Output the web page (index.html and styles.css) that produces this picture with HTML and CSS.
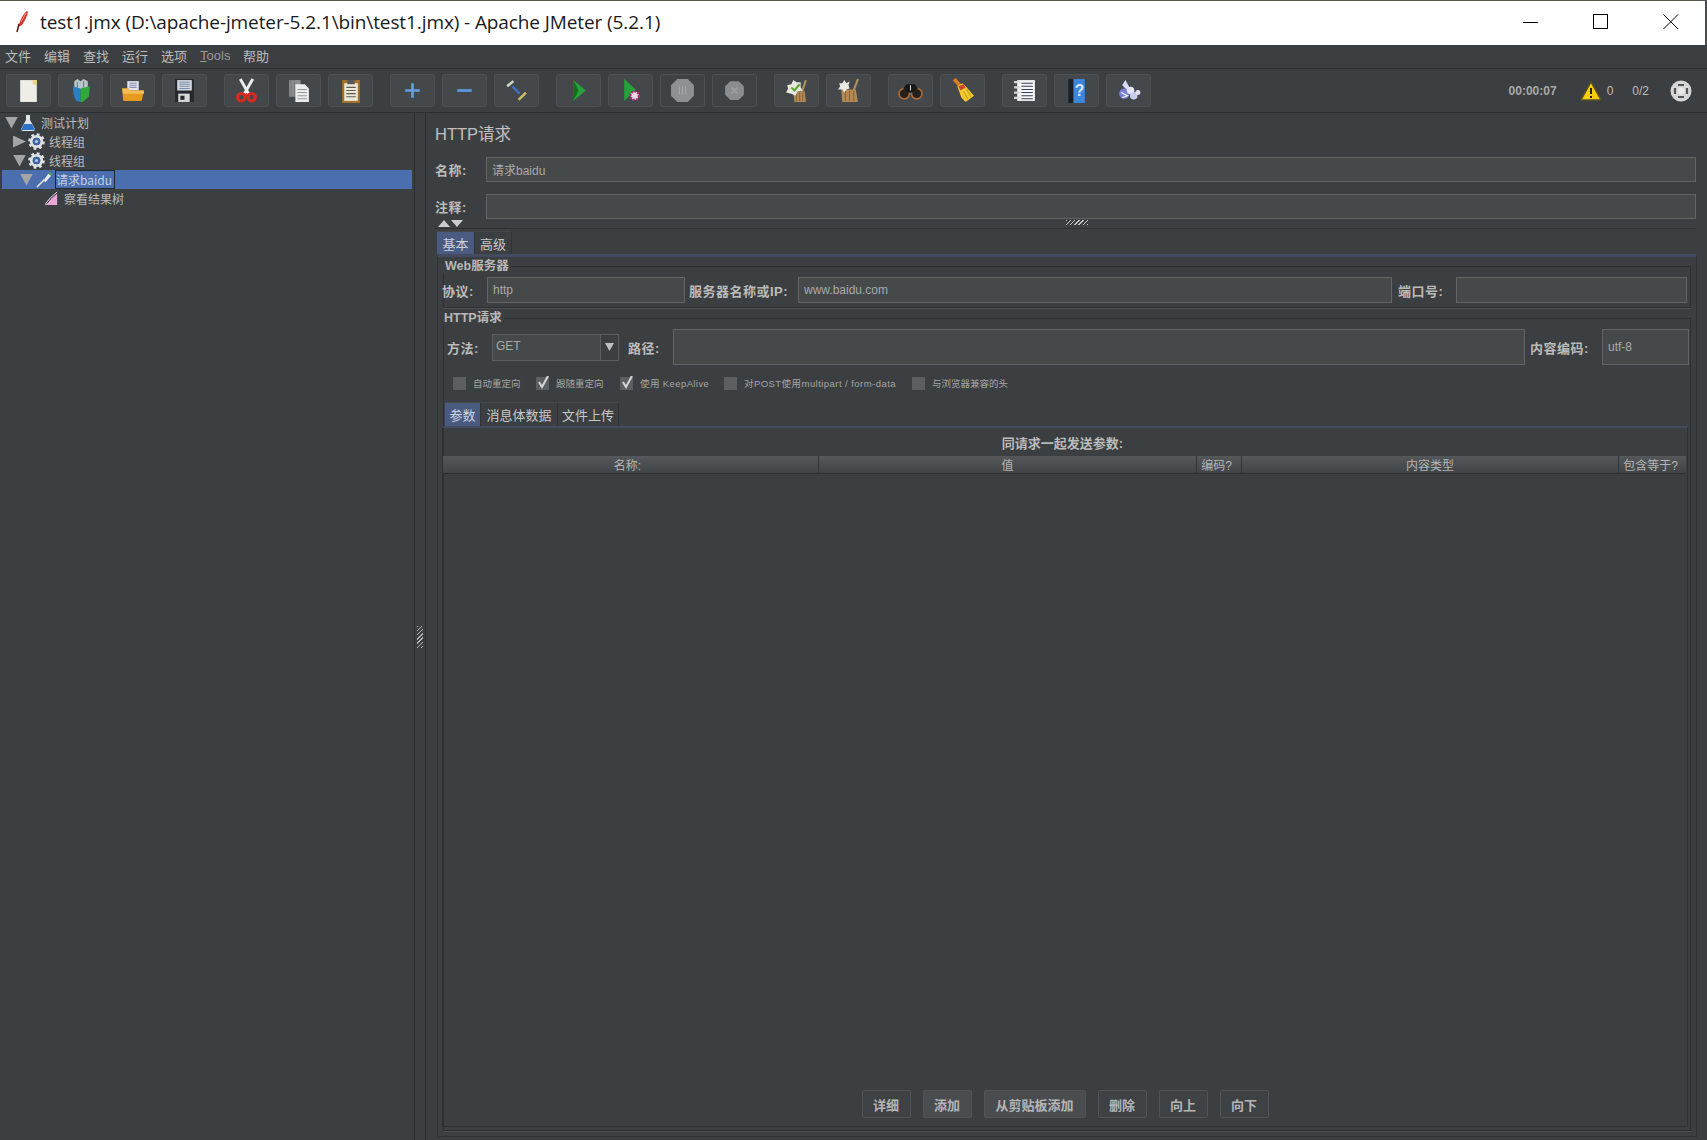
FILE: index.html
```html
<!DOCTYPE html>
<html lang="zh">
<head>
<meta charset="utf-8">
<title>Apache JMeter</title>
<link rel="stylesheet" href="styles.css">
</head>
<body>
<div class="window">
  <header class="titlebar">
    <svg class="feather" viewBox="0 0 14 24"><path d="M12 1C9 3 6 8 4 14L3 17 7 15C10 11 12 6 13 2Z" fill="#d8322a"/><path d="M4 14L2 22" stroke="#5a1a14" stroke-width="1.5"/><path d="M11 3L6 12" stroke="#f0a080"/></svg>
    <span class="title-text">test1.jmx (D:\apache-jmeter-5.2.1\bin\test1.jmx) - Apache JMeter (5.2.1)</span>
    <div class="winctl">
      <svg class="wc" viewBox="0 0 16 16"><path d="M0 8.5H15" stroke="#000"/></svg>
      <svg class="wc" viewBox="0 0 16 16"><rect x="0.5" y="0.5" width="14" height="14" fill="none" stroke="#000"/></svg>
      <svg class="wc" viewBox="0 0 16 16"><path d="M0.5 0.5L15 15M15 0.5L0.5 15" stroke="#000"/></svg>
    </div>
  </header>
  <nav class="menubar">
    <span>文件</span><span>编辑</span><span>查找</span><span>运行</span><span>选项</span><span class="menu-latin"><u>T</u>ools</span><span>帮助</span>
  </nav>
  <div class="toolbar">
    <div class="tgroup">
      <div class="tbtn"><svg viewBox="0 0 24 24"><path d="M4 2H20V23H4Z" fill="#efeee6"/><path d="M16 2H20V6L18 7L16 5Z" fill="#efd678"/></svg></div>
      <div class="tbtn"><svg viewBox="0 0 24 24"><path d="M6 3L9 1L12 3L15 1L19 3V11H6Z" fill="#b9c6c8"/><path d="M5 8L12 10V23L8 22Q4 16 5 8Z" fill="#2a7fc4"/><path d="M12 10L21 8L20 18L14 23H12Z" fill="#2fa83c"/><path d="M9 4V9M15 3V9" stroke="#5a7a88"/></svg></div>
      <div class="tbtn"><svg viewBox="0 0 24 24"><path d="M7 3H18V12H7Z" fill="#e0e3ee"/><path d="M9 5H16M9 7H16M9 9H16" stroke="#8a8fb0"/><path d="M2 10H8L10 12H23L21 21Q21 22 20 22H4Q3 22 3 21Z" fill="#e69a1e"/><path d="M2 10H8L10 12H23V15H3Z" fill="#f4bd57"/></svg></div>
      <div class="tbtn"><svg viewBox="0 0 24 24"><path d="M3 1H21V23H3Z" fill="#26282b"/><path d="M5 2H19V12H5Z" fill="#d4d9e4"/><path d="M7 4H17M7 6H17M7 8H17M7 10H17" stroke="#7a8ea8"/><path d="M6 15H17V23H6Z" fill="#d6d8da"/><path d="M8 17H12V21H8Z" fill="#26282b"/></svg></div>
    </div>
    <div class="tgroup">
      <div class="tbtn"><svg viewBox="0 0 24 24"><path d="M6 1L14 15M18 1L10 15" stroke="#eeeeee" stroke-width="2.8"/><circle cx="7" cy="18.5" r="3.6" fill="none" stroke="#d62a22" stroke-width="3"/><circle cx="17" cy="18.5" r="3.6" fill="none" stroke="#d62a22" stroke-width="3"/><path d="M9 15H15L12 18Z" fill="#d62a22"/></svg></div>
      <div class="tbtn"><svg viewBox="0 0 24 24"><path d="M3 2H14V18H3Z" fill="#8d9094"/><path d="M5 2V18M8 2V18" stroke="#777"/><path d="M9 6H18L22 10V23H9Z" fill="#ececec"/><path d="M11 11H20M11 14H20M11 17H20M11 20H20" stroke="#999"/></svg></div>
      <div class="tbtn"><svg viewBox="0 0 24 24"><path d="M4 2H21V24H4Z" fill="#a5702a"/><path d="M6 5H19V22H6Z" fill="#ece8d6"/><path d="M9 2H16V6H9Z" fill="#55585a"/><path d="M8 9H17M8 12H17M8 15H17M8 18H17" stroke="#5a5a5a"/></svg></div>
    </div>
    <div class="tgroup">
      <div class="tbtn"><svg viewBox="0 0 24 24"><path d="M12 5V19M5 12H19" stroke="#5f9fe6" stroke-width="2.6"/></svg></div>
      <div class="tbtn"><svg viewBox="0 0 24 24"><path d="M5 12H19" stroke="#5a94d8" stroke-width="2.8"/></svg></div>
      <div class="tbtn"><svg viewBox="0 0 24 24"><path d="M3 8L9 3" stroke="#d8d8c8" stroke-width="2.4"/><path d="M8 8L15 15" stroke="#3f6fc0" stroke-width="2.4"/><path d="M14 21L21 14" stroke="#c8c068" stroke-width="2.4"/></svg></div>
    </div>
    <div class="tgroup">
      <div class="tbtn"><svg viewBox="0 0 24 24"><path d="M7 2L19 12L7 22Z" fill="#25a23a"/><path d="M7 2L12 12L7 22Z" fill="#126c22"/></svg></div>
      <div class="tbtn"><svg viewBox="0 0 24 24"><path d="M6 1L17 11L6 22Z" fill="#25a23a"/><circle cx="16" cy="17" r="4" fill="#e8d8e8" stroke="#b02a70" stroke-width="2" stroke-dasharray="2 1"/></svg></div>
      <div class="tbtn ghost"><svg viewBox="0 0 24 24"><path d="M7 1H17L23 7V17L17 23H7L1 17V7Z" fill="#8f9091"/><path d="M9 8V16M12 8V16M15 8V16" stroke="#a8a8a8"/></svg></div>
      <div class="tbtn ghost"><svg viewBox="0 0 24 24"><path d="M8 3H16L21 8V16L16 21H8L3 16V8Z" fill="#8b8c8d"/><path d="M9 9L15 15M15 9L9 15" stroke="#9f9f9f" stroke-width="2"/></svg></div>
    </div>
    <div class="tgroup">
      <div class="tbtn"><svg viewBox="0 0 24 24"><path d="M9 13H20L21 23H10Z" fill="#b58955"/><path d="M12 14V22M15 14V22M18 14V22" stroke="#8a6435"/><path d="M21 2L17 14" stroke="#b09060" stroke-width="2"/><path d="M3 7L7 6L9 2L12 4L16 4L16 9L18 12L13 13L11 17L7 15L2 14L4 10Z" fill="#e8e8e0"/><path d="M7 9L10 12L15 6" stroke="#5aa832" stroke-width="2" fill="none"/></svg></div>
      <div class="tbtn"><svg viewBox="0 0 24 24"><path d="M5 11H19L21 23H6Z" fill="#b58955"/><path d="M9 12V22M13 12V22M17 12V22" stroke="#8a6435"/><path d="M21 1L17 12" stroke="#b09060" stroke-width="2"/><path d="M13 3L10 5L8 2L6 5L3 5L4 8L2 11L6 11L8 14L10 11L13 10L12 7Z" fill="#e8e8e0"/></svg></div>
    </div>
    <div class="tgroup">
      <div class="tbtn"><svg viewBox="0 0 24 24"><circle cx="6" cy="15" r="5" fill="#26201d" stroke="#a86a38" stroke-width="1.6"/><circle cx="18" cy="15" r="5" fill="#26201d" stroke="#a86a38" stroke-width="1.6"/><path d="M5 10L8 6H16L19 10L14 14H10Z" fill="#181818"/><path d="M12 7V12" stroke="#ddd"/></svg></div>
      <div class="tbtn"><svg viewBox="0 0 24 24"><path d="M4 1L11 9" stroke="#d87a20" stroke-width="3.6"/><path d="M7 8L12 5L15 8L23 17L15 23L11 19Z" fill="#f2c92c"/><path d="M8 8L13 6L15 9L10 12Z" fill="#c8482a"/><path d="M13 13L17 20M16 11L20 18" stroke="#c9a018"/></svg></div>
    </div>
    <div class="tgroup">
      <div class="tbtn"><svg viewBox="0 0 24 24"><path d="M5 2H22V22H5Z" fill="#f5f5f5"/><path d="M9 5H20M9 8H20M9 11H20M9 14H20M9 17H20M9 20H20" stroke="#344058"/><path d="M2 4H8M2 9H8M2 14H8M2 19H8" stroke="#d8d8d8" stroke-width="2.2"/></svg></div>
      <div class="tbtn"><svg viewBox="0 0 24 24"><path d="M4 1H20V24H4Z" fill="#3d86da"/><path d="M4 1H9V24H4Z" fill="#1c1f24"/><text x="15" y="17" class="qmark">?</text></svg></div>
      <div class="tbtn"><svg viewBox="0 0 24 24"><path d="M9 2L13 9L10 11L6 7Z" fill="#d8dcf4"/><circle cx="8" cy="15" r="5" fill="#7a80d8"/><circle cx="14" cy="12" r="3.6" fill="#e4e6f6"/><circle cx="17" cy="17" r="3.6" fill="#c8cdf0"/><circle cx="21" cy="14" r="2.4" fill="#dfe1f2"/><path d="M5 14L11 17L6 19" stroke="#fff" fill="none"/></svg></div>
    </div>
    <div class="status">
      <span class="timer">00:00:07</span>
      <span class="warn"><svg class="warn-ic" viewBox="0 0 22 20"><path d="M11 1L21 19H1Z" fill="#f4cd0a" stroke="#5a5020" stroke-width="1.4"/><path d="M11 7V13M11 15V17" stroke="#222" stroke-width="2"/></svg>0</span>
      <span class="count">0/2</span>
      <svg class="globe" viewBox="0 0 22 22"><circle cx="11" cy="11" r="10.5" fill="#d6d6d6"/><path d="M8 5H14M8 17H14M5 8V14M17 8V14" stroke="#555" stroke-width="2.2"/><circle cx="11" cy="11" r="3.6" fill="#e8e8e8"/></svg>
    </div>
  </div>
  <div class="workspace">
    <aside class="tree">
      <div class="row d0"><i class="arrow down"></i><svg class="tic" viewBox="0 0 16 16"><path d="M6 0H10V5L15 14Q15 16 13 16H3Q1 16 1 14L6 5Z" fill="#dfe4ea"/><path d="M4 9H12L15 15H1Z" fill="#2a72c8"/></svg><span>测试计划</span></div>
      <div class="row d1"><i class="arrow right"></i><svg class="tic" viewBox="0 0 18 18"><circle cx="9" cy="9" r="5.5" fill="none" stroke="#dfe3e8" stroke-width="3"/><circle cx="9" cy="9" r="7.6" fill="none" stroke="#dfe3e8" stroke-width="2.4" stroke-dasharray="3 2.97"/><circle cx="9" cy="9" r="4" fill="#3f66a8"/><circle cx="9" cy="9" r="1.6" fill="#b8c8e0"/></svg><span>线程组</span></div>
      <div class="row d1"><i class="arrow down"></i><svg class="tic" viewBox="0 0 18 18"><circle cx="9" cy="9" r="5.5" fill="none" stroke="#dfe3e8" stroke-width="3"/><circle cx="9" cy="9" r="7.6" fill="none" stroke="#dfe3e8" stroke-width="2.4" stroke-dasharray="3 2.97"/><circle cx="9" cy="9" r="4" fill="#3f66a8"/><circle cx="9" cy="9" r="1.6" fill="#b8c8e0"/></svg><span>线程组</span></div>
      <div class="row d2 selected"><i class="arrow down"></i><svg class="tic" viewBox="0 0 18 18"><path d="M1 17L9 9" stroke="#e8e8e8" stroke-width="1.6"/><path d="M8 10L13 3L16 5L10 12Z" fill="#e8ece8"/><path d="M13 3L15 1L17 3L16 5Z" fill="#3fa85a"/></svg><span class="focused">请求baidu</span></div>
      <div class="row d3"><svg class="tic" viewBox="0 0 16 16"><path d="M2 15L8 8L14 3V15Z" fill="#eaa6d6"/><path d="M2 15V13L7 7L14 1" stroke="#f4e8f4" fill="none"/></svg><span>察看结果树</span></div>
    </aside>
    <div class="split-v"><i class="grip-v"></i></div>
    <main class="pane">
      <h1 class="pane-title">HTTP请求</h1>
      <div class="name-row gap"><label>名称:</label><div class="field">请求baidu</div></div>
      <div class="name-row"><label>注释:</label><div class="field"></div></div>
      <div class="split-h"><span class="carets"><i class="car-up"></i><i class="car-down"></i></span><i class="grip-h"></i></div>
      <div class="tabs outer-tabs"><span class="tab active t-basic">基本</span><span class="tab">高级</span></div>
      <section class="tab-body">
        <fieldset class="group web">
          <legend>Web服务器</legend>
          <div class="web-row">
            <label class="l-proto">协议:</label><div class="field f-proto">http</div>
            <label class="l-host">服务器名称或IP:</label><div class="field f-host">www.baidu.com</div>
            <label class="l-port">端口号:</label><div class="field f-port"></div>
          </div>
        </fieldset>
        <fieldset class="group http">
          <legend>HTTP请求</legend>
          <div class="path-row">
            <label class="l-method">方法:</label>
            <div class="select"><span class="sel-val">GET</span><span class="sel-btn"><i class="car-down big"></i></span></div>
            <label class="l-path">路径:</label><div class="field f-path"></div>
            <label class="l-enc">内容编码:</label><div class="field f-enc">utf-8</div>
          </div>
          <div class="checks">
            <span class="chk c1"><i class="box"></i><span>自动重定向</span></span>
            <span class="chk c2"><i class="box"><svg viewBox="0 0 14 14"><path d="M3 6L6 11L12 0" fill="none" stroke="#d6d6d6" stroke-width="2"/></svg></i><span>跟随重定向</span></span>
            <span class="chk c3"><i class="box"><svg viewBox="0 0 14 14"><path d="M3 6L6 11L12 0" fill="none" stroke="#d6d6d6" stroke-width="2"/></svg></i><span>使用 KeepAlive</span></span>
            <span class="chk c4"><i class="box"></i><span>对POST使用multipart / form-data</span></span>
            <span class="chk c5"><i class="box"></i><span>与浏览器兼容的头</span></span>
          </div>
          <div class="tabs inner-tabs"><span class="tab active t-params">参数</span><span class="tab t-body">消息体数据</span><span class="tab t-file">文件上传</span></div>
          <section class="params">
            <div class="params-title">同请求一起发送参数:</div>
            <div class="thead">
              <span class="th c-name">名称:</span><span class="th c-val">值</span><span class="th c-code">编码?</span><span class="th c-type">内容类型</span><span class="th c-eq">包含等于?</span>
            </div>
            <div class="tbody"></div>
            <div class="actions">
              <span class="act a2">详细</span><span class="act a2 on">添加</span><span class="act a6 on">从剪贴板添加</span><span class="act a2">删除</span><span class="act a2">向上</span><span class="act a2">向下</span>
            </div>
          </section>
        </fieldset>
      </section>
    </main>
  </div>
</div>
</body>
</html>
```

FILE: styles.css
```css
* { box-sizing: border-box; }
html, body { margin: 0; height: 100%; overflow: hidden; }
body { font-family: "Liberation Sans", "Noto Sans CJK SC", sans-serif; font-size: 12px; color: #bbbbbb; background: #3c3f41; }
.window { width: 1707px; height: 1140px; display: flex; flex-direction: column; background: #3c3f41; }

.titlebar { height: 45px; flex: none; background: #fff; border-top: 1px solid #55574f; display: flex; align-items: center; padding: 0 0 2px 15px; color: #1a1a1a; border-right: 2px solid #4a4c4e; }
.feather { width: 14px; height: 24px; margin-right: 11px; }
.title-text { font-family: "Open Sans", "Noto Sans", sans-serif; font-size: 19px; letter-spacing: -0.1px; white-space: nowrap; }
.winctl { margin-left: auto; display: flex; gap: 54px; padding-right: 26px; }
.wc { width: 16px; height: 16px; }

.menubar { height: 24px; flex: none; display: flex; align-items: center; gap: 13px; padding: 0 0 2px 5px; font-size: 13px; color: #bbb; border-bottom: 1px solid #2b2d2e; font-family: "Noto Sans CJK SC", sans-serif; }
.menu-latin { font-family: "Liberation Sans", sans-serif; color: #999; width: 30px; }

.toolbar { height: 44px; flex: none; display: flex; align-items: center; padding-left: 6px; gap: 17px; border-bottom: 1px solid #2b2d2e; }
.tgroup { display: flex; gap: 7px; }
.tbtn { width: 45px; height: 33px; display: flex; align-items: center; justify-content: center; background: #45484a; border: 1px solid #4e5153; border-radius: 3px; }
.tbtn svg { width: 25px; height: 25px; }
.tbtn.ghost { background: #3f4244; }
.qmark { font: bold 15px "Liberation Sans", sans-serif; fill: #d8e8ff; text-anchor: middle; }
.status { margin-left: auto; display: flex; align-items: center; font-size: 12px; color: #bbb; padding-right: 15px; }
.timer { margin-right: 23px; font-weight: bold; color: #a8a8a8; }
.warn { display: flex; align-items: center; gap: 5px; margin-right: 19px; }
.warn-ic { width: 22px; height: 20px; }
.count { margin-right: 21px; }
.globe { width: 22px; height: 22px; }

.workspace { flex: 1; display: flex; min-height: 0; }
.tree { width: 415px; flex: none; padding: 0 2px; border-right: 1px solid #2b2d2e; font-family: "Noto Sans CJK SC", sans-serif; font-size: 12px; }
.row { height: 19px; display: flex; align-items: center; }
.row.d0 { padding-left: 3px; }
.row.d1 { padding-left: 11px; }
.row.d2 { padding-left: 18px; }
.row.d3 { padding-left: 42px; }
.row.selected { background: #4b6eaf; }
.arrow { width: 13px; height: 12px; flex: none; margin-right: 2px; background: #a5a5a5; }
.arrow.down { clip-path: polygon(0 0, 100% 0, 50% 100%); }
.arrow.right { clip-path: polygon(0 0, 100% 50%, 0 100%); }
.tic { width: 17px; height: 17px; flex: none; margin-right: 4px; }
.d3 .tic { width: 15px; height: 15px; margin-right: 5px; }
.d0 .tic { width: 16px; height: 16px; margin-right: 5px; }
.d2 .tic { margin-right: 2px; margin-left: 1px; }
.focused { border: 1px solid #1d2733; padding: 0 2px 0 0; line-height: 17px; height: 19px; width: 60px; color: #c3cfe2; }

.split-v { width: 10px; flex: none; position: relative; }
.grip-v { position: absolute; left: 2px; top: 513px; width: 6px; height: 22px; background: repeating-linear-gradient(135deg, #b5b5b5 0 1px, #3c3f41 1px 3px); }

.pane { flex: 1; min-width: 0; display: flex; flex-direction: column; padding: 0 11px 0 9px; border-left: 1px solid #2b2d2e; }
.pane-title { margin: 10px 0 0; font-size: 16.5px; line-height: 22px; font-weight: normal; color: #c0c0c0; font-family: "Liberation Sans", "Noto Sans CJK SC", sans-serif; height: 34px; }
.name-row { display: flex; align-items: center; height: 25px; flex: none; }
.name-row.gap { margin-bottom: 12px; }
.name-row label { width: 51px; flex: none; font-weight: bold; font-size: 13px; letter-spacing: 0.5px; }
.field { flex: 1; height: 100%; display: flex; align-items: center; background: #45494a; border: 1px solid #646464; padding-left: 5px; color: #a9a9a9; font-size: 12px; }

.split-h { height: 10px; flex: none; display: flex; align-items: center; position: relative; border-bottom: 1px solid #2f3133; }
.carets { display: flex; margin-left: 3px; gap: 1px; }
.car-up, .car-down { display: block; width: 12px; height: 7px; background: #ccc; }
.car-up { clip-path: polygon(50% 0, 100% 100%, 0 100%); }
.car-down { clip-path: polygon(0 0, 100% 0, 50% 100%); }
.grip-h { position: absolute; left: 631px; top: 1px; width: 22px; height: 5px; background: repeating-linear-gradient(135deg, #c5c5c5 0 1px, #3c3f41 1px 3px); }

.tabs { display: flex; align-items: flex-end; padding-left: 2px; }
.tab { height: 23px; display: flex; align-items: center; justify-content: center; font-size: 13px; color: #c8c8c8; border-right: 1px solid #313335; border-top: 1px solid #46494b; }
.tab.active { background: #4a5a80; color: #ccd4e4; }
.outer-tabs { margin-top: 1px; height: 24px; flex: none; }
.outer-tabs .tab { width: 37px; }
.outer-tabs .t-basic { width: 38px; }
.tab-body { flex: 1; min-height: 0; margin: 0 0 3px 2px; display: flex; flex-direction: column; padding: 1px 5px 5px; border-top: 3px solid #454a63; border-left: 1px solid #2f3133; border-right: 1px solid #2f3133; border-bottom: 1px solid #2f3133; width: 1260px; }

.group { margin: 0; padding: 0 5px 0 4px; border: 1px solid #2d2f31; min-width: 0; box-shadow: 0 1px 0 #4d5052; }
.group legend { padding: 0 2px; margin-left: -5px; font-size: 12.5px; font-weight: bold; line-height: 14px; color: #b8b8b8; }
.group.web { flex: none; height: 49px; margin-top: 1px; }
.web-row { display: flex; align-items: center; height: 26px; margin-top: 4px; }
.web-row label, .path-row label { font-weight: bold; font-size: 13px; letter-spacing: 0.5px; white-space: nowrap; }
.l-proto { width: 45px; margin-left: -6px; flex: none; }
.f-proto { flex: none; width: 198px; }
.l-host { width: 113px; padding-left: 4px; flex: none; }
.f-host { flex: none; width: 594px; }
.l-port { width: 64px; padding-left: 6px; flex: none; }
.f-port { flex: none; width: 231px; }

.group.http { flex: 1; min-height: 0; display: flex; flex-direction: column; margin-top: 3px; padding: 0 2px 0 3px; }
.path-row { display: flex; align-items: center; height: 36px; margin-top: 4px; flex: none; }
.l-method { width: 45px; padding-left: 0; flex: none; }
.select { width: 127px; height: 27px; display: flex; border: 1px solid #5b5d5f; flex: none; background: #45494a; }
.sel-val { flex: 1; padding: 4px 0 0 3px; color: #a9a9a9; }
.sel-btn { width: 18px; border-left: 1px solid #5b5d5f; display: flex; align-items: center; justify-content: center; background: #3c3f41; }
.car-down.big { width: 9px; height: 8px; background: #c0c0c0; }
.l-path { width: 54px; padding-left: 9px; flex: none; }
.f-path { flex: none; width: 852px; }
.l-enc { width: 77px; padding-left: 5px; flex: none; }
.f-enc { flex: none; width: 87px; }

.checks { display: flex; height: 18px; margin-top: 9px; align-items: center; font-size: 9.5px; color: #a5a5a5; flex: none; }
.chk { display: flex; align-items: center; gap: 7px; white-space: nowrap; }
.box { width: 13px; height: 13px; background: #5c5f61; display: block; position: relative; flex: none; }
.box svg { position: absolute; left: 0; top: -1px; width: 14px; height: 14px; }
.c1 { width: 83px; margin-left: 6px; }
.c2 { width: 84px; }
.c3 { width: 104px; letter-spacing: 0.4px; }
.c4 { width: 188px; letter-spacing: 0.45px; }

.inner-tabs { height: 25px; margin: 9px 0 0 -2px; padding-left: 0; flex: none; }
.inner-tabs .tab { height: 24px; }
.t-params { width: 36px; }
.t-body { width: 77px; }
.t-file { width: 61px; }

.params { flex: 1; min-height: 0; display: flex; flex-direction: column; border-top: 2px solid #454a63; border-left: 1px solid #2f3133; border-right: 1px solid #2f3133; border-bottom: 1px solid #2f3133; margin: 0 0 3px -5px; }
.params-title { height: 28px; flex: none; display: flex; align-items: center; justify-content: center; font-weight: bold; font-size: 13px; padding-right: 5px; }
.thead { display: flex; height: 18px; flex: none; margin-right: 1px; background: linear-gradient(#55585b, #414446); border-bottom: 1px solid #2b2d2e; }
.th { display: flex; align-items: center; justify-content: center; border-right: 1px solid #333537; font-size: 12px; color: #b5b5b5; white-space: nowrap; }
.c-name { width: 376px; padding-right: 6px; }
.c-val { width: 378px; }
.c-code { width: 45px; padding-right: 5px; }
.c-type { width: 377px; }
.c-eq { flex: 1; border-right: 0; padding-right: 4px; }
.tbody { flex: 1; min-height: 0; }
.actions { height: 36px; flex: none; display: flex; justify-content: center; gap: 12px; padding-bottom: 8px; }
.act { height: 28px; display: flex; align-items: center; justify-content: center; background: #3f4244; border: 1px solid #515456; border-radius: 2px; font-size: 13px; font-weight: bold; color: #b5b5b5; }
.act.a2 { width: 49px; }
.act.a6 { width: 102px; }
.act.on { background: #4a4d50; }
```
